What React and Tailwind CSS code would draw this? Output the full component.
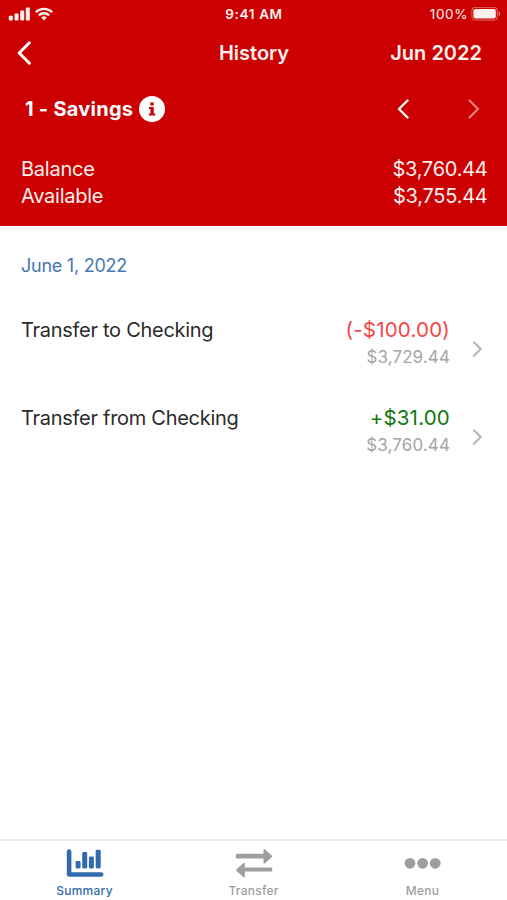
import clsx from 'clsx'

const transactions = [
  { id: 1, title: 'Transfer to Checking', amount: '(-$100.00)', balance: '$3,729.44', credit: false },
  { id: 2, title: 'Transfer from Checking', amount: '+$31.00', balance: '$3,760.44', credit: true },
]

function Chevron({ className, left, strokeWidth = 2 }) {
  return (
    <svg viewBox="0 0 12 20" className={className} fill="none" stroke="currentColor" strokeWidth={strokeWidth} strokeLinecap="round" strokeLinejoin="round">
      <path d={left ? 'M10.5 1.5L2 10l8.5 8.5' : 'M1.5 1.5L10 10l-8.5 8.5'} />
    </svg>
  )
}

function StatusBar() {
  return (
    <div className="grid h-[27px] grid-cols-3 items-center px-2 text-[13.5px]">
      <div className="flex items-center gap-[5px]">
        <svg viewBox="0 0 22 14" className="h-[14px] w-[22px]" fill="currentColor">
          <rect x="0.8" y="8.8" width="4" height="4.7" rx="1" />
          <rect x="6.5" y="6.4" width="4" height="7.1" rx="1" />
          <rect x="12.2" y="3.6" width="4" height="9.9" rx="1" />
          <rect x="17.8" y="0.6" width="4" height="12.9" rx="1" />
        </svg>
        <svg viewBox="0 0 18 14" className="h-[14px] w-[18px]" fill="none" stroke="currentColor" strokeWidth="2.3">
          <path d="M0.8 5.2a11.6 11.6 0 0 1 16.4 0" />
          <path d="M3.8 8.4a7.4 7.4 0 0 1 10.4 0" />
          <path d="M9 13.4L6.2 10.6a4 4 0 0 1 5.6 0z" fill="currentColor" stroke="none" />
        </svg>
      </div>
      <span className="pt-[2px] pl-[1px] text-center font-semibold tracking-[0.65px]">9:41 AM</span>
      <div className="flex items-center justify-end gap-[3px]">
        <span className="pt-[2px] tracking-[0.6px]">100%</span>
        <svg viewBox="0 0 30 14" className="-mr-[2px] h-[14px] w-[30px]" fill="currentColor">
          <rect x="0.9" y="0.3" width="25.4" height="12.8" rx="3.2" fill="none" stroke="currentColor" strokeOpacity="0.45" />
          <rect x="2.4" y="2" width="22.4" height="9.4" rx="1.8" />
          <path d="M27.6 4.6v4.4q1.7-.8 1.7-2.2t-1.7-2.2z" fillOpacity="0.5" />
        </svg>
      </div>
    </div>
  )
}

function TransactionRow({ title, amount, balance, credit }) {
  return (
    <li className="flex h-[88px] items-center pr-[24px] pl-[21px]">
      <p className="mb-[19px] flex-1 text-[20px] leading-[26px] tracking-[-0.28px] text-[#2b2b2b]">{title}</p>
      <div className="mt-[8px] text-right">
        <p className={clsx('text-[20.5px] leading-[28px] tracking-[0.2px]', credit ? 'text-[#107810]' : 'text-[#f84444]')}>{amount}</p>
        <p className="text-[17px] leading-[27px] tracking-[0.1px] text-[#a5a5a5]">{balance}</p>
      </div>
      <Chevron className="mt-[19px] ml-[22px] h-[16px] w-[11px] text-[#b5b5b5]" strokeWidth={2.6} />
    </li>
  )
}

function TabItem({ label, active, children }) {
  return (
    <button className={clsx('flex flex-1 flex-col items-center pt-[7px]', active ? 'text-[#336aad]' : 'text-[#9e9e9e]')}>
      <svg viewBox="0 0 38 30" className="h-[30px] w-[38px]" fill="currentColor">
        {children}
      </svg>
      <span className="mt-[5px] text-[12px] leading-[16px] font-medium tracking-[0.25px]">{label}</span>
    </button>
  )
}

export default function App() {
  return (
    <div className="flex h-[900px] w-full flex-col overflow-hidden bg-white font-['Inter','Liberation_Sans',sans-serif]">
      <header className="h-[226px] bg-[#cc0000] text-[#fff0f0]">
        <StatusBar />

        <div className="grid h-[52px] grid-cols-3 items-center border-b border-[#c30000] pr-[25px] pl-[16px] text-[20px] font-semibold">
          <Chevron left className="h-[24px] w-[16px] text-white" strokeWidth={2.5} />
          <h1 className="pl-[10px] text-center">History</h1>
          <span className="text-right">Jun 2022</span>
        </div>

        {/* Account switcher */}
        <div className="flex h-[59px] items-center pr-[27px] pl-[25px]">
          <h2 className="text-[20px] font-bold tracking-[0.25px] text-white">1 - Savings</h2>
          <svg viewBox="0 0 26 26" className="ml-[6px] h-[26px] w-[26px]">
            <circle cx="13" cy="13" r="13" fill="#fff" />
            <path d="M11.3 6.5h3.4v3h-3.4zM10 11h4.7v6.4h1.6v2.1H10v-2.1h1.5v-4.3H10z" fill="#cc0000" />
          </svg>
          <div className="ml-auto flex items-center gap-[59px]">
            <Chevron left className="h-[20px] w-[12px] text-white" strokeWidth={2.4} />
            <Chevron className="h-[20px] w-[12px] text-[#e88080]" strokeWidth={2.2} />
          </div>
        </div>

        <dl className="mt-[18px] grid grid-cols-2 pr-[19.5px] pl-[21px] text-[20px] leading-[27px] tracking-[-0.25px]">
          <dt>Balance</dt>
          <dd className="text-right">$3,760.44</dd>
          <dt>Available</dt>
          <dd className="text-right">$3,755.44</dd>
        </dl>
      </header>

      <main className="flex-1">
        <h3 className="mt-[27px] pl-[21px] text-[18px] leading-[25px] tracking-[-0.25px] text-[#4678b6]">June 1, 2022</h3>
        <ul className="mt-[17px]">
          {transactions.map((t) => (
            <TransactionRow key={t.id} {...t} />
          ))}
        </ul>
      </main>

      <nav className="flex h-[61px] border-t-2 border-[#ebebeb]">
        <TabItem label="Summary" active>
          <path d="M3.1 3.5v23h32" fill="none" stroke="currentColor" strokeWidth="4.6" strokeLinejoin="round" strokeLinecap="round" />
          <rect x="9.6" y="13" width="5" height="7.5" rx="1.4" />
          <rect x="16.2" y="4" width="5" height="16.5" rx="1.4" />
          <rect x="22.9" y="8.6" width="5" height="11.9" rx="1.4" />
          <rect x="29.7" y="1.8" width="5" height="18.7" rx="1.4" />
        </TabItem>
        <TabItem label="Transfer">
          <path d="M2 5.8h26.5V2.2q0-2 1.5-.7l6.7 6q.9.9 0 1.8l-6.7 6q-1.5 1.2-1.5-.7v-4.2H2q-1.300 0-1.300-1.300v-2q0-1.300 1.300-1.300z" />
          <path d="M36 19.6H9.800v-3.600q0-2-1.500-.7l-6.700 6q-.9.9 0 1.800l6.700 6q1.500 1.200 1.500-.7v-4.800H36q1.300 0 1.300-1.300v-1.400q0-1.300-1.300-1.300z" />
        </TabItem>
        <TabItem label="Menu">
          <circle cx="6" cy="15.3" r="5.4" />
          <circle cx="18.6" cy="15.3" r="5.4" />
          <circle cx="31.2" cy="15.3" r="5.4" />
        </TabItem>
      </nav>
    </div>
  )
}
